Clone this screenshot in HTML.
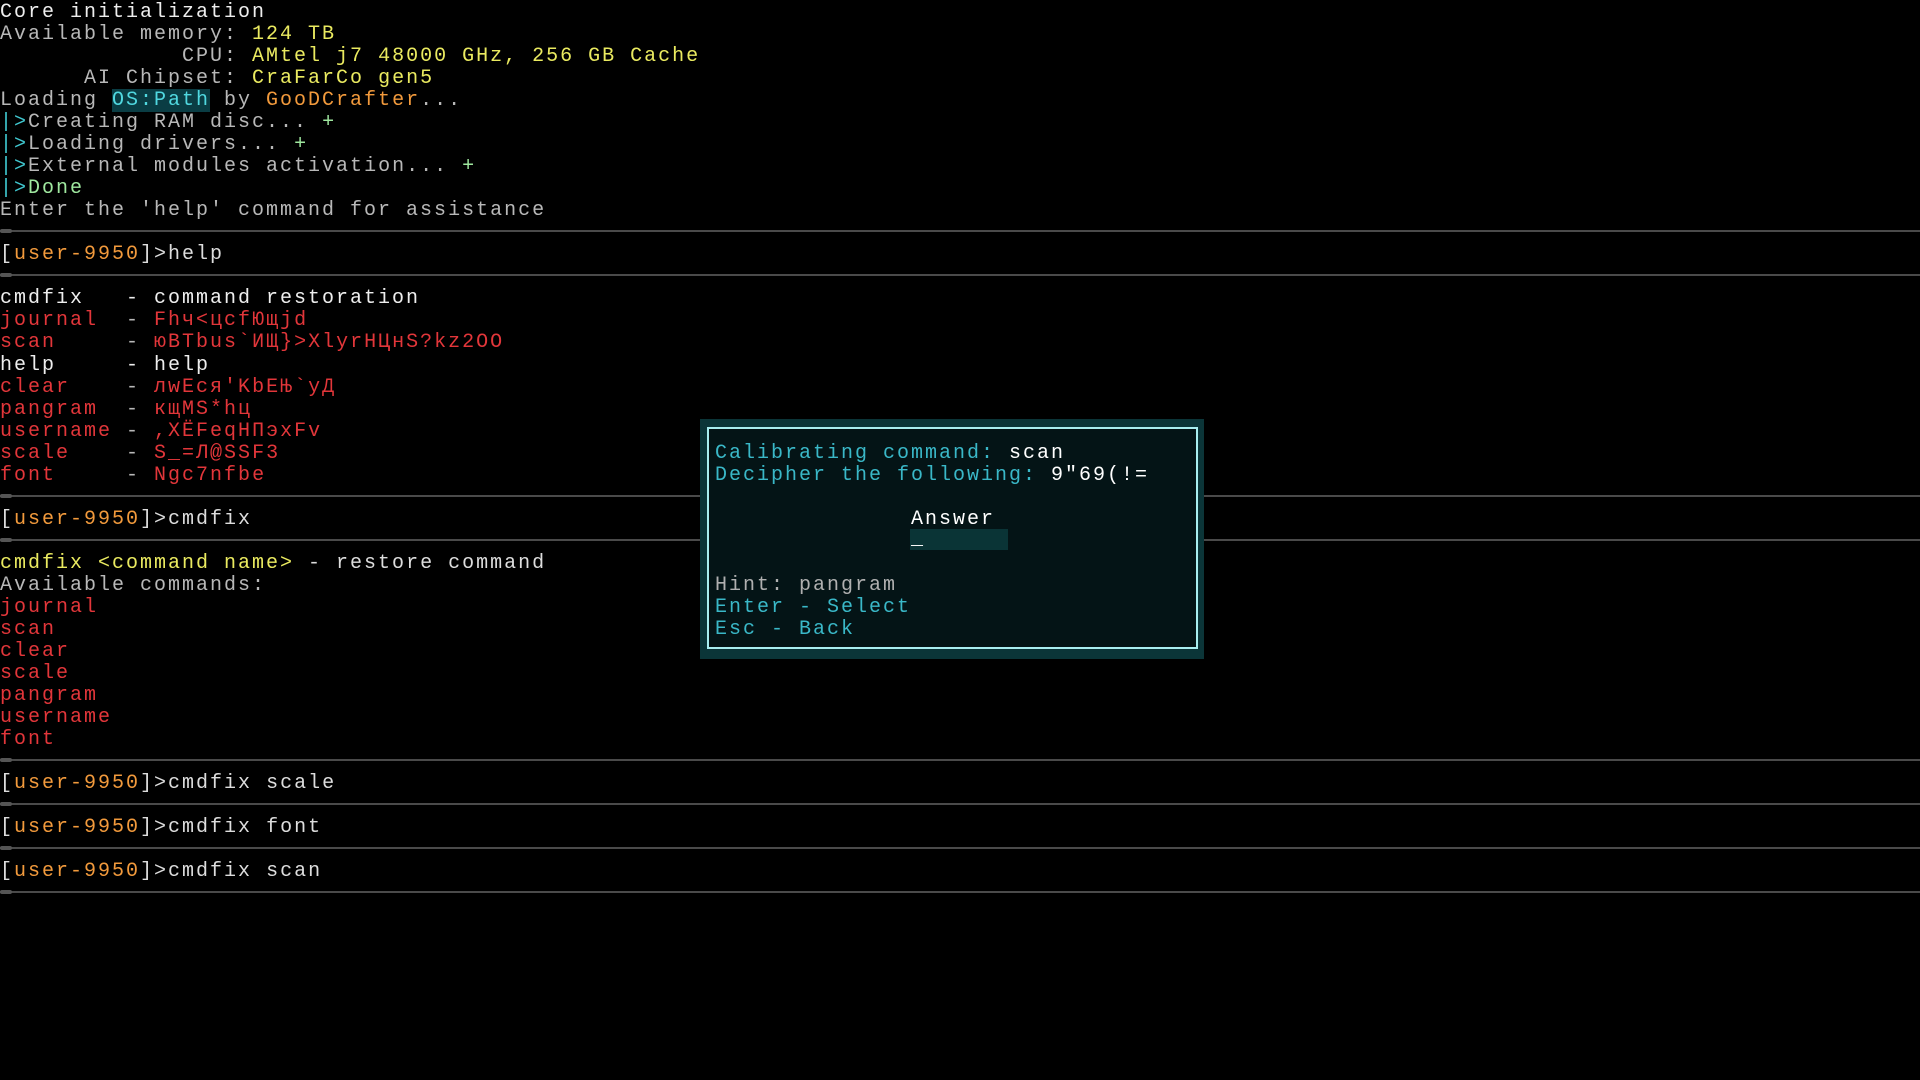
<!DOCTYPE html>
<html><head><meta charset="utf-8"><style>
html,body{margin:0;padding:0;background:#000;width:1920px;height:1080px;overflow:hidden}
.t{position:absolute;left:0;top:0;width:1920px;font-family:"Liberation Mono","DejaVu Sans Mono",monospace;font-size:20px;letter-spacing:2px;line-height:22.04px;color:#ddd}
.l{height:22.04px;white-space:pre;position:relative;top:2px}
.sep{height:22.04px;position:relative}
.sep:before{content:"";position:absolute;left:0;right:0;top:10px;height:2px;background:#4a4a4a}
.sep:after{content:"";position:absolute;left:0;width:12px;top:9px;height:4px;background:#555;border-radius:2px}
.g{color:#b8b8b8}.y{color:#eaea60}.o{color:#f29a3c}.c{color:#40c8d0}.gr{color:#9fe89f}.r{color:#e2363a}.w{color:#eee}
.os{color:#50d8e0;background:#0a3d44}
.m{position:absolute;left:700px;top:419px;width:504px;height:240px;background:#0b3538}
.mi{position:absolute;left:7px;top:8px;width:487px;height:218px;border:2px solid #a8eef0;background:#041416}
.mt{position:absolute;font-family:"Liberation Mono",monospace;font-size:20px;letter-spacing:2px;line-height:22.04px;white-space:pre;color:#3ab8c8}
</style></head><body>
<div class="t"><div class="l w">Core initialization</div><div class="l g">Available memory: <span class="y">124 TB</span></div><div class="l g">             CPU: <span class="y">AMtel j7 48000 GHz, 256 GB Cache</span></div><div class="l g">      AI Chipset: <span class="y">CraFarCo gen5</span></div><div class="l g">Loading <span class="os">OS:Path</span> by <span class="o">GooDCrafter</span>...</div><div class="l g"><span class="c">|&gt;</span>Creating RAM disc... <span class="gr">+</span></div><div class="l g"><span class="c">|&gt;</span>Loading drivers... <span class="gr">+</span></div><div class="l g"><span class="c">|&gt;</span>External modules activation... <span class="gr">+</span></div><div class="l gr"><span class="c">|&gt;</span>Done</div><div class="l g">Enter the 'help' command for assistance</div><div class="sep"></div><div class="l">[<span class="o">user-9950</span>]&gt;help</div><div class="sep"></div><div class="l w">cmdfix   - command restoration</div><div class="l r">journal  <span class="g">-</span> Fhч&lt;цcfЮщjd</div><div class="l r">scan     <span class="g">-</span> юBTbus`ИЩ}&gt;XlyrHЦнS?kz2OO</div><div class="l w">help     - help</div><div class="l r">clear    <span class="g">-</span> лwEcя'KbEЊ`yД</div><div class="l r">pangram  <span class="g">-</span> кщMS*hц</div><div class="l r">username <span class="g">-</span> ,XЁFeqHПэxFv</div><div class="l r">scale    <span class="g">-</span> S_=Л@SSF3</div><div class="l r">font     <span class="g">-</span> Ngc7nfbe</div><div class="sep"></div><div class="l">[<span class="o">user-9950</span>]&gt;cmdfix</div><div class="sep"></div><div class="l"><span class="y">cmdfix &lt;command name&gt;</span> - restore command</div><div class="l g">Available commands:</div><div class="l r">journal</div><div class="l r">scan</div><div class="l r">clear</div><div class="l r">scale</div><div class="l r">pangram</div><div class="l r">username</div><div class="l r">font</div><div class="sep"></div><div class="l">[<span class="o">user-9950</span>]&gt;cmdfix scale</div><div class="sep"></div><div class="l">[<span class="o">user-9950</span>]&gt;cmdfix font</div><div class="sep"></div><div class="l">[<span class="o">user-9950</span>]&gt;cmdfix scan</div><div class="sep"></div></div>
<div class="m"><div class="mi"></div>
<div class="mt" style="left:15px;top:24px">Calibrating command: <span style="color:#fff">scan</span>
Decipher the following: <span style="color:#fff">9"69(!=</span></div>
<div class="mt" style="left:211px;top:90px;color:#fff">Answer</div>
<div style="position:absolute;left:210px;top:110px;width:98px;height:21px;background:#0a3436"></div>
<div class="mt" style="left:211px;top:110px;color:#fff">_</div>
<div class="mt" style="left:15px;top:156px"><span style="color:#b0b0b0">Hint: pangram</span>
Enter - Select
Esc - Back</div>
</div>
</body></html>
